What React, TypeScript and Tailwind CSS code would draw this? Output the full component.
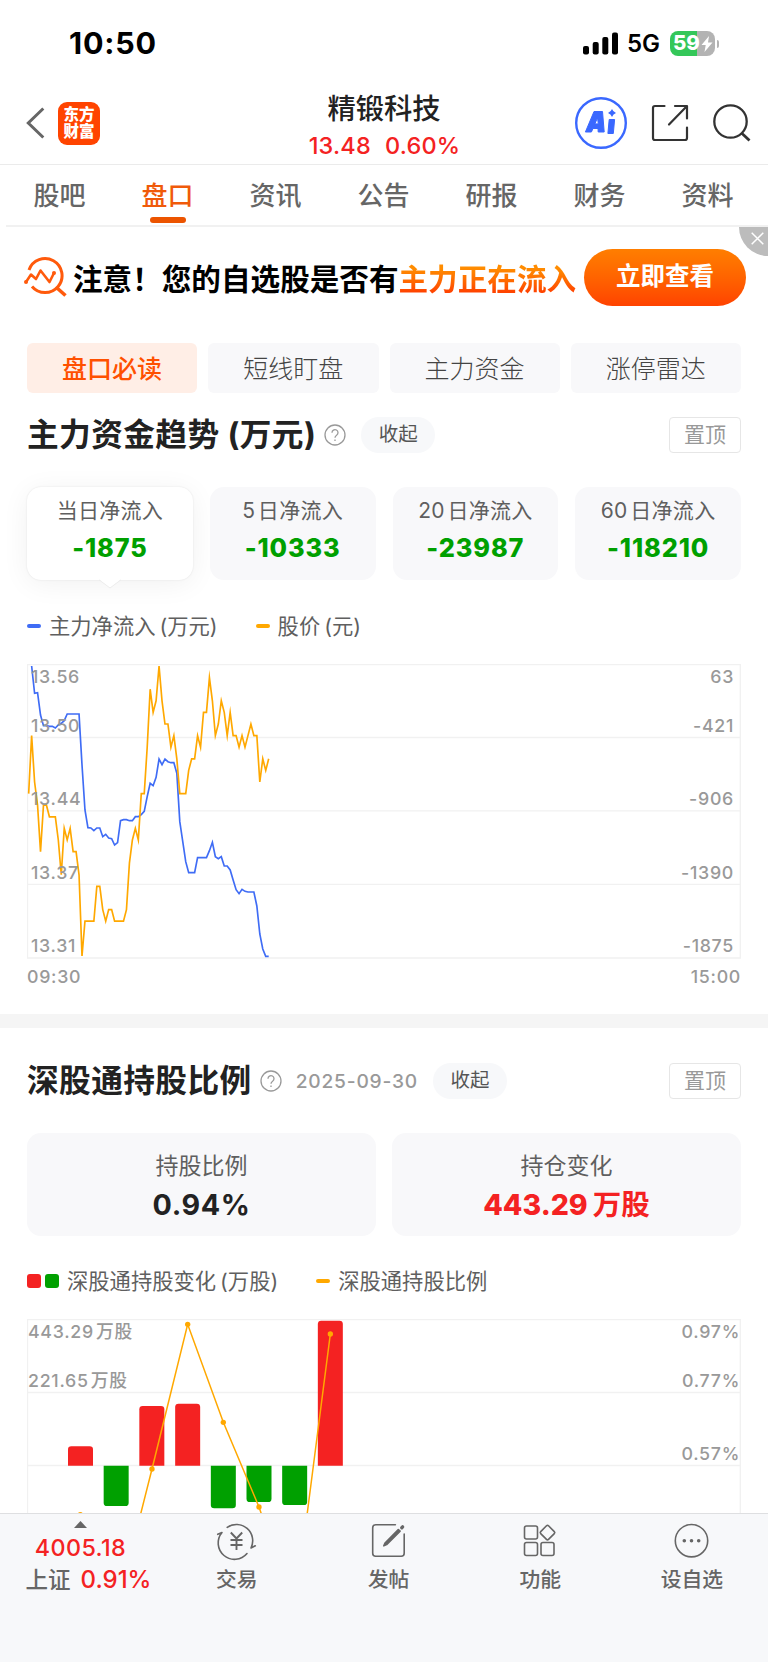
import type { ReactNode } from 'react';
import clsx from 'clsx';

const tabs = ['股吧', '盘口', '资讯', '公告', '研报', '财务', '资料'];
const chips = ['盘口必读', '短线盯盘', '主力资金', '涨停雷达'];

const flows = [
  { label: '当日净流入', value: '-1875' },
  { label: '5日净流入', value: '-10333' },
  { label: '20日净流入', value: '-23987' },
  { label: '60日净流入', value: '-118210' },
];

// Cents below the 13.56 high, one entry per minute from 09:30.
const priceDrop = [
  11, 6, 10, 12, 16, 12, 12, 13, 13, 13, 15, 18, 14, 15, 14, 16, 16, 18, 25, 22, 22, 22, 22, 19, 19, 21, 22, 21, 21,
  22, 22, 22, 22, 21, 17, 15, 14, 15, 11, 11, 7, 2, 4, 3, 0, 3, 5, 5, 7, 6, 8, 11, 11, 11, 9, 8, 8, 6, 7, 4, 4, 1, 3,
  6, 5, 3, 4, 6, 4, 6, 6, 7, 6, 7, 6, 5, 6, 6, 10, 8, 9, 8,
];

// Net inflow curve in plot units, starting one minute after the open.
const inflowY = [
  6, 88, 86, 153, 185, 185, 187, 187, 192, 183, 178, 170, 150, 150, 150, 150, 150, 303, 438, 491, 492, 500, 492, 492,
  518, 511, 522, 524, 543, 536, 470, 467, 467, 470, 470, 458, 458, 452, 442, 398, 358, 365, 340, 285, 302, 285, 293,
  296, 296, 328, 473, 533, 593, 626, 626, 626, 581, 581, 581, 581, 560, 535, 578, 584, 578, 606, 606, 618, 648, 677,
  689, 676, 682, 684, 684, 684, 726, 810, 855, 877, 877,
];

const STEP = 8.89;
const pricePoints = priceDrop.map((d, i) => `${5 + i * STEP},${6 + d * 34.8}`).join(' ');
const inflowPoints = inflowY.map((y, i) => `${5 + (i + 1) * STEP},${y}`).join(' ');

const bars = [
  { x: 123, h: 58 },
  { x: 230, h: -121 },
  { x: 337, h: 179 },
  { x: 444.5, h: 186 },
  { x: 551.5, h: -128 },
  { x: 658.5, h: -109 },
  { x: 765.5, h: -118 },
  { x: 872.5, h: 435 },
];

const ratio = [
  [160, 587],
  [267, 878],
  [375, 450],
  [482, 16],
  [589, 310],
  [696, 564],
  [803, 876],
  [910, 45],
];

function StatusBar() {
  return (
    <div className="flex h-[82px] shrink-0 items-center justify-between pl-[69px] pr-[49px] pt-[5px]">
      <span className="text-[30.5px] font-bold leading-none tracking-[0.8px] text-black">10:50</span>
      <div className="flex items-center">
        <svg width="36" height="24" viewBox="0 0 36 24">
          <rect x="0" y="14" width="6" height="8.5" rx="2" />
          <rect x="9.7" y="10" width="6" height="12.5" rx="2" />
          <rect x="19.3" y="5" width="6" height="17.5" rx="2" />
          <rect x="29" y="0.5" width="6" height="22" rx="2" />
        </svg>
        <span className="ml-2 w-[34px] text-[24px] font-semibold leading-none text-black">5G</span>
        <div className="relative ml-[9px] flex h-[25px] w-[45px] items-center overflow-hidden rounded-[8px] bg-linear-to-r from-[#34c759] from-59% to-[#b3b3b3] to-59%">
          <span className="ml-[3px] text-[20.5px] font-extrabold leading-none text-white">59</span>
          <svg width="14" height="18" viewBox="0 0 14 18">
            <path d="M9 1 1.5 10h4.2L4.5 17 12.5 7.5H8z" fill="#fff" />
          </svg>
        </div>
        <span className="ml-[1.5px] h-2 w-[2.5px] rounded-r-full bg-[#b3b3b3]" />
      </div>
    </div>
  );
}

function Header() {
  return (
    <header className="grid h-[83px] shrink-0 grid-cols-[1fr_auto_1fr] items-center border-b border-[#ebebeb] px-[17px]">
      <div className="ml-[9px] flex items-center">
        <svg width="20" height="34" viewBox="0 0 20 34" fill="none" stroke="#666" strokeWidth="3">
          <path d="M17.3 2.5 2.3 17l15 14.5" />
        </svg>
        <div className="ml-3 flex h-[43px] w-[42px] flex-col items-center justify-center rounded-[9px] bg-[#ff4400] text-[15.5px] font-black leading-[17.5px] text-white">
          <span>东方</span>
          <span>财富</span>
        </div>
      </div>
      <div className="flex flex-col items-center pt-2">
        <h1 className="text-[28.3px] font-medium leading-[38px] text-[#222]">精锻科技</h1>
        <div className="ml-px flex gap-[14px] text-[23.5px] font-medium leading-[36px] tracking-[0.2px] text-[#f42222]">
          <span>13.48</span>
          <span>0.60%</span>
        </div>
      </div>
      <div className="flex items-center justify-end">
        <svg width="52" height="52" viewBox="0 0 52 52">
          <circle cx="26" cy="26" r="24.8" fill="none" stroke="#3a68ff" strokeWidth="2.4" />
          <path
            fillRule="evenodd"
            fill="#3a68ff"
            stroke="#3a68ff"
            strokeWidth="1"
            strokeLinejoin="round"
            d="M19 14.5h8.5l1.7 20.5h-6l-.2-3.5h-5l-1.6 3.5h-6zM22.5 20.8 19.9 26.9h3.4z"
          />
          <path
            fill="#3a68ff"
            stroke="#3a68ff"
            strokeLinejoin="round"
            d="M34.2 22.5h5.4l-1.3 14h-5.4z"
          />
          <path fill="#3a68ff" d="M37 12q1.1 2.9 4 4-2.9 1.1-4 4-1.1-2.9-4-4 2.9-1.1 4-4z" />
        </svg>
        <svg
          className="ml-6"
          width="38"
          height="38"
          viewBox="0 0 38 38"
          fill="none"
          stroke="#333"
          strokeWidth="2.2"
          strokeLinecap="round"
          strokeLinejoin="round"
        >
          <path d="M13.5 2H4Q2 2 2 4v30q0 2 2 2h30q2 0 2-2V23.5" />
          <path d="M24 2h12v12.5M35.5 2.5 18 20.5" />
        </svg>
        <svg className="ml-6" width="38" height="38" viewBox="0 0 38 38" fill="none" stroke="#333" strokeWidth="2.3">
          <circle cx="17.5" cy="17.5" r="16.2" />
          <path d="M28.5 29l8 7.5" strokeWidth="2.8" />
        </svg>
      </div>
    </header>
  );
}

function TabBar() {
  return (
    <nav className="ml-[6px] flex h-[62px] shrink-0 border-b-2 border-[#f1f1f1] pr-[6px]">
      {tabs.map((tab) => (
        <div key={tab} className="flex w-[108px] shrink-0 flex-col items-center justify-between pt-3">
          <span
            className={clsx(
              '-ml-px text-[26px] font-medium leading-[38px]',
              tab === '盘口' ? 'text-[#f05a0a]' : 'text-[#666]'
            )}
          >
            {tab}
          </span>
          {tab === '盘口' && <span className="mb-[2px] h-[6px] w-9 rounded-full bg-[#ec5400]" />}
        </div>
      ))}
    </nav>
  );
}

function Banner() {
  return (
    <div className="relative flex h-[100px] shrink-0 items-center pl-6">
      <svg width="43" height="40" viewBox="0 0 43 40" fill="none" stroke="#ff5a0c" strokeWidth="3" strokeLinejoin="round">
        <path d="M5 13A17 17 0 1 1 8 29.5" />
        <path d="m33 31 8.5 7.5" strokeWidth="3.6" />
        <path d="m2 25 5-7.5 5 4.5 4.5-8.5 9 11.5 4.5-9" strokeWidth="2.6" />
        <circle cx="2" cy="25" r="2" fill="#ff5a0c" stroke="none" />
        <circle cx="30" cy="16" r="2" fill="#ff5a0c" stroke="none" />
      </svg>
      <p className="ml-[6px] whitespace-nowrap pt-1 text-[29.6px] font-bold leading-10 text-black">
        注意！您的自选股是否有
        <span className="bg-linear-to-b from-[#ff8c00] from-20% to-[#ff4400] to-85% bg-clip-text text-transparent">
          主力正在流入
        </span>
      </p>
      <button
        type="button"
        className="ml-2 flex h-[57px] w-[162px] shrink-0 items-center justify-center rounded-full bg-linear-to-b from-[#ff7e00] to-[#ff4200] pb-0.5 text-[24.5px] font-bold text-white"
      >
        立即查看
      </button>
      <div className="absolute right-0 top-0 flex h-[29px] w-[29px] items-center justify-center rounded-bl-[29px] bg-[#bcbcbc] pb-[7px] pl-[7px]">
        <svg width="13" height="13" viewBox="0 0 13 13" stroke="#fff" strokeWidth="1.5">
          <path d="m.7.7 11.6 11.6M12.3.7.7 12.3" />
        </svg>
      </div>
    </div>
  );
}

function SectionTitle({ title, date }: { title: string; date?: string }) {
  return (
    <div className="flex h-9 items-center">
      <h2 className="text-[31.7px] font-bold leading-9 tracking-[0.4px] text-[#222]">{title}</h2>
      <svg
        className="ml-2 shrink-0"
        width="22"
        height="22"
        viewBox="0 0 22 22"
        fill="none"
        stroke="#999"
        strokeWidth="1.3"
      >
        <circle cx="11" cy="11" r="10" />
        <path d="M8 8.7a3 3 0 1 1 4.6 2.5q-1.6 1-1.6 2.6" />
        <path d="M11 15.4v1.5" />
      </svg>
      {date && (
        <span className="ml-[14px] text-[19.2px] font-medium leading-9 tracking-[0.8px] text-[#999]">{date}</span>
      )}
      <span className="ml-[15px] flex h-9 w-[74px] items-center justify-center rounded-full bg-[#f7f8fa] text-[19.5px] text-[#555]">
        收起
      </span>
      <span className="ml-auto flex h-9 w-[72px] items-center justify-center rounded-[4px] border border-[#e6e6e6] text-[21px] text-[#999]">
        置顶
      </span>
    </div>
  );
}

function Legend({ mark, children }: { mark: ReactNode; children: ReactNode }) {
  return (
    <div className="flex items-center gap-2">
      {mark}
      <span className="whitespace-nowrap text-[21.3px] leading-8 text-[#5f5f5f] [word-spacing:-2px]">{children}</span>
    </div>
  );
}

function AxisLabels({ left, right, pad }: { left: string[]; right: string[]; pad: string }) {
  return (
    <div
      className={clsx(
        'absolute inset-0 text-[17.8px] font-medium leading-[22px] tracking-[0.7px] text-[#999]',
        pad
      )}
    >
      {right.map((r, i) => (
        <div key={r} className={clsx('flex justify-between', i === 0 ? 'h-[50.5px] pt-[2px]' : 'h-[73.5px]')}>
          <span>{left[i]}</span>
          <span>{r}</span>
        </div>
      ))}
    </div>
  );
}

function CapitalTrend() {
  return (
    <section className="shrink-0 px-[27px]">
      <div className="grid grid-cols-4 gap-[11px] pt-4">
        {chips.map((chip, i) => (
          <span
            key={chip}
            className={clsx(
              'flex h-[50px] items-center justify-center rounded-[6px] pt-[3px] text-[25px]',
              i === 0 ? 'bg-[#ffeee6] font-medium text-[#ff5000]' : 'bg-[#f8f8fa] font-light text-[#444]'
            )}
          >
            {chip}
          </span>
        ))}
      </div>
      <div className="mt-[24px]">
        <SectionTitle title="主力资金趋势 (万元)" />
      </div>
      <div className="mt-[34px] grid grid-cols-4 gap-[17px]">
        {flows.map((f, i) => (
          <div
            key={f.label}
            className={clsx(
              'relative flex h-[93px] flex-col items-center rounded-[14px] pt-2',
              i === 0 ? 'bg-white shadow-[0_0_2px_rgba(0,0,0,0.1),0_4px_28px_rgba(0,0,0,0.06)]' : 'bg-[#f8f8fa]'
            )}
          >
            <span className="text-[21px] leading-8 tracking-[0.3px] text-[#5f5f5f]">{f.label}</span>
            <span className="mt-1 text-[25.3px] font-extrabold leading-[34px] tracking-[0.9px] text-[#00a000]">
              {f.value}
            </span>
            {i === 0 && (
              <svg className="absolute left-[72px] top-[92px]" width="22" height="10" viewBox="0 0 22 10">
                <path d="M0 0h22L11 9z" fill="#fff" />
                <path d="M0 .8 11 9 22 .8" fill="none" stroke="#ececec" strokeWidth="1" />
              </svg>
            )}
          </div>
        ))}
      </div>
      <div className="mt-[30px] flex gap-[38px]">
        <Legend mark={<i className="h-[3.5px] w-[14px] rounded-full bg-[#3f6cf5]" />}>主力净流入 (万元)</Legend>
        <Legend mark={<i className="h-[3.5px] w-[14px] rounded-full bg-[#ffa800]" />}>股价 (元)</Legend>
      </div>
      <div className="relative mt-[22px] h-[295px]">
        <svg className="block" width="714" height="295" viewBox="0 0 2142 885" fill="none">
          <path
            d="M0 2H2142M0 220.5H2142M0 440.5H2142M0 661H2142M0 882H2142M1.5 0V884M2140 0V884"
            stroke="#f1f1f1"
            strokeWidth="4"
          />
          <polyline points={inflowPoints} stroke="#3f6cf5" strokeWidth="5" strokeMiterlimit="10" />
          <polyline points={pricePoints} stroke="#ffa800" strokeWidth="5" strokeMiterlimit="10" />
        </svg>
        <AxisLabels
          left={['13.56', '13.50', '13.44', '13.37', '13.31']}
          right={['63', '-421', '-906', '-1390', '-1875']}
          pad="pl-1 pr-[7px]"
        />
      </div>
      <div className="flex h-9 items-center justify-between pt-px text-[17.8px] font-medium tracking-[0.7px] text-[#999]">
        <span>09:30</span>
        <span>15:00</span>
      </div>
    </section>
  );
}

function Holdings() {
  return (
    <section className="min-h-0 flex-1 overflow-hidden px-[27px] pt-[35px]">
      <SectionTitle title="深股通持股比例" date="2025-09-30" />
      <div className="mt-[34px] grid grid-cols-2 gap-4">
        <div className="flex h-[103px] flex-col items-center rounded-[14px] bg-[#f8f8fa] pt-4">
          <span className="text-[23px] leading-[34px] text-[#5f5f5f]">持股比例</span>
          <span className="mt-1 text-[28.7px] font-bold leading-9 tracking-[0.6px] text-[#222]">0.94%</span>
        </div>
        <div className="flex h-[103px] flex-col items-center rounded-[14px] bg-[#f8f8fa] pt-4">
          <span className="text-[23px] leading-[34px] text-[#5f5f5f]">持仓变化</span>
          <span className="mt-1 flex gap-[5px] text-[28.5px] font-extrabold leading-9 text-[#f42222]">
            443.29<span className="font-bold">万股</span>
          </span>
        </div>
      </div>
      <div className="mt-[29px] flex gap-[38px]">
        <Legend
          mark={
            <span className="flex gap-[4px]">
              <i className="h-[14px] w-[14px] rounded-[3px] bg-[#f42222]" />
              <i className="h-[14px] w-[14px] rounded-[3px] bg-[#00a000]" />
            </span>
          }
        >
          深股通持股变化 (万股)
        </Legend>
        <Legend mark={<i className="h-[3.5px] w-[14px] rounded-full bg-[#ffa800]" />}>深股通持股比例</Legend>
      </div>
      <div className="relative mt-[22px] h-[295px]">
        <svg className="block" width="714" height="295" viewBox="0 0 2142 885" fill="none">
          <path d="M0 2H2142M0 220.5H2142M0 439.5H2142M1.5 0V884M2140 0V884" stroke="#f1f1f1" strokeWidth="4" />
          {bars.map((b) => (
            <path
              key={b.x}
              fill={b.h > 0 ? '#f42222' : '#00a000'}
              d={
                b.h > 0
                  ? `M${b.x} 440v${10 - b.h}q0-10 10-10h55q10 0 10 10V440z`
                  : `M${b.x} 440v${-b.h - 10}q0 10 10 10h55q10 0 10-10V440z`
              }
            />
          ))}
          <polyline points={ratio.join(' ')} stroke="#ffa800" strokeWidth="4.5" />
          {ratio.map(([x, y]) => (
            <circle key={x} cx={x} cy={y} r="8" fill="#ffa800" />
          ))}
        </svg>
        <AxisLabels left={['443.29万股', '221.65万股']} right={['0.97%', '0.77%', '0.57%']} pad="pl-[1px] pr-[1px]" />
      </div>
    </section>
  );
}

const navIcons = [
  {
    label: '交易',
    icon: (
      <>
        <path d="M10.2 4.3A16.3 16.3 0 0 1 34 25l4.3-2.2" />
        <path d="M30 30.5A16.3 16.3 0 0 1 5 9.5L.7 11.3" />
        <path
          d="m13.8 9.5 5.7 6 5.7-6M13.5 17h12M13.5 22h12M19.5 15.5V27"
          strokeLinecap="butt"
          strokeWidth="1.9"
        />
      </>
    ),
  },
  {
    label: '发帖',
    icon: (
      <>
        <path d="M26.4 1.8H6.7Q3.7 1.8 3.7 4.8v25.5q0 3 3 3h25.500q3 0 3-3V11" />
        <path d="M14.8 22.8 16 20 29.3 6.5l1.8 1.7L17.6 21.6z" fill="#666" />
        <path d="m32.8 4.7.8-.8" strokeWidth="3.4" />
      </>
    ),
  },
  {
    label: '功能',
    icon: (
      <>
        <rect x="3.5" y="3" width="13" height="13" rx="2" />
        <rect x="3.5" y="19.5" width="13" height="13" rx="2" />
        <rect x="20" y="19.5" width="13" height="13" rx="2" />
        <path d="m25.5 2.8q1-1 2 0l5.8 5.8q1 1 0 2l-5.8 5.8q-1 1-2 0l-5.8-5.8q-1-1 0-2z" />
      </>
    ),
  },
  {
    label: '设自选',
    icon: (
      <>
        <circle cx="19.5" cy="17.7" r="16.2" />
        <path d="M12.3 17.7h.01M19.5 17.7h.01M26.7 17.7h.01" strokeWidth="3.6" />
      </>
    ),
  },
];

function BottomBar() {
  return (
    <footer className="flex h-[149px] shrink-0 border-t border-[#dedfe1] bg-[#f7f8fa]">
      <div className="flex w-[161px] flex-col items-center pt-[7px]">
        <svg width="13" height="7" viewBox="0 0 13 7">
          <path d="M0 7 6.5 0 13 7z" fill="#666" />
        </svg>
        <span className="mt-[4px] text-[23.3px] font-medium leading-8 tracking-[0.4px] text-[#f42222]">4005.18</span>
        <span className="ml-4 flex gap-[10px] whitespace-nowrap text-[22.5px] font-medium leading-8 text-[#666]">
          上证 <b className="text-[24px] font-medium text-[#f42222]">0.91%</b>
        </span>
      </div>
      {navIcons.map((n) => (
        <div key={n.label} className="flex w-[151.7px] flex-col items-center pt-[9px]">
          <svg
            className="overflow-visible"
            width="39"
            height="36"
            viewBox="0 0 39 36"
            fill="none"
            stroke="#666"
            strokeWidth="1.6"
            strokeLinecap="round"
            strokeLinejoin="round"
          >
            {n.icon}
          </svg>
          <span className="mt-[5px] text-[20.8px] font-medium leading-8 text-[#666]">{n.label}</span>
        </div>
      ))}
    </footer>
  );
}

export default function App() {
  return (
    <div className="flex h-[1662px] w-[768px] flex-col overflow-hidden bg-white font-[Inter,'Noto_Sans_CJK_SC',sans-serif] [text-autospace:normal]">
      <StatusBar />
      <Header />
      <TabBar />
      <Banner />
      <CapitalTrend />
      <div className="mt-[19px] h-[14px] shrink-0 bg-[#f5f5f5]" />
      <Holdings />
      <BottomBar />
    </div>
  );
}
